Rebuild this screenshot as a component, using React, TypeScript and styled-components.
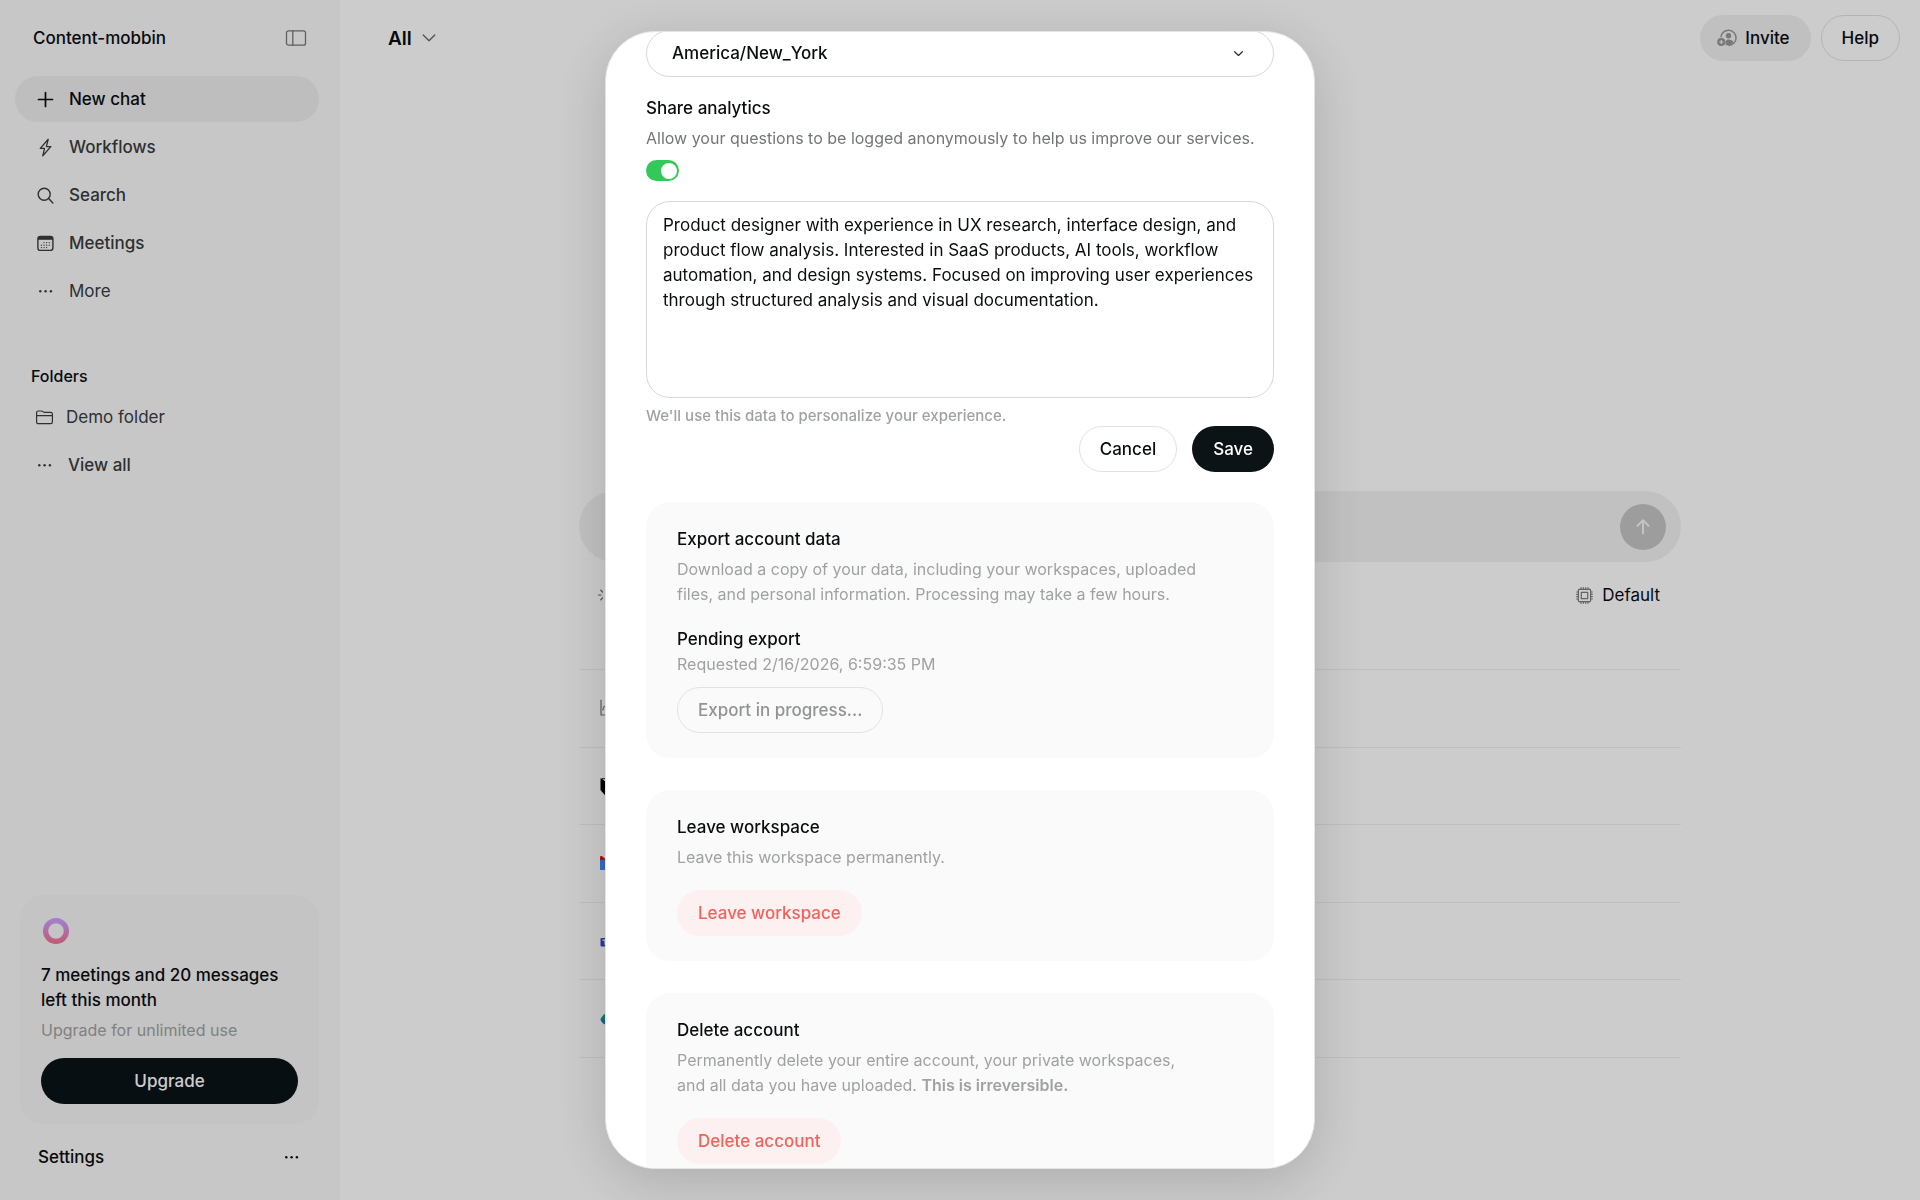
import React, { useState } from "react";
import styled, { createGlobalStyle, css } from "styled-components";

const color = {
  ink: "#0a0d0f",
  body: "#3a3d3f",
  muted: "#a0a2a2",
  soft: "#747676",
  line: "#e2e2e2",
  solid: "#0b1317",
  danger: "#f1635a",
};

const GlobalStyle = createGlobalStyle`
  *, *::before, *::after { box-sizing: border-box; }
  html, body, #root { height: 100%; }
  body {
    margin: 0;
    background: #ffffff;
    color: ${color.ink};
    font-family: Inter, "Liberation Sans", Arial, sans-serif;
    font-size: 17px;
    line-height: 25px;
    overflow: hidden;
  }
  button, select, textarea, input { font: inherit; color: inherit; }
  h1, h2, h3, p, ul { margin: 0; padding: 0; font-size: inherit; font-weight: inherit; }
  ul { list-style: none; }
`;

/* ---------- shell ---------- */

const Shell = styled.div`
  display: grid;
  grid-template-columns: 340px 1fr;
  min-height: 100%;
`;

const Sidebar = styled.aside`
  display: flex;
  flex-direction: column;
  padding: 15px 21px 20px 15px;
  background: #f9f9f9;
`;

const SidebarHead = styled.header`
  display: flex;
  align-items: center;
  justify-content: space-between;
  height: 46px;
  margin-bottom: 15px;
  padding: 0 12px 0 18px;
  font-weight: 500;
`;

const IconButton = styled.button`
  display: flex;
  padding: 0;
  border: 0;
  background: none;
  color: ${(p) => p.color || color.body};
  cursor: pointer;
`;

const Nav = styled.nav`
  display: flex;
  flex-direction: column;
  gap: 2px;
`;

const NavLink = styled.a<{ $active?: boolean; $light?: boolean }>`
  display: flex;
  align-items: center;
  gap: 14px;
  height: 46px;
  padding: 0 21px;
  border-radius: 23px;
  background: ${(p) => (p.$active ? "#eeeeee" : "transparent")};
  color: ${(p) => (p.$active ? color.ink : color.body)};
  font-weight: ${(p) => (p.$light ? 400 : 500)};
  text-decoration: none;
`;

const FoldersTitle = styled.h2`
  margin: 50px 0 5px 16px;
  font-size: 16px;
  font-weight: 500;
`;

const FolderNav = styled(Nav)`
  a {
    padding-left: 20px;
  }
`;

const FolderLink = styled(NavLink)`
  gap: 12px;
`;

const UpgradeCard = styled.section`
  display: flex;
  flex-direction: column;
  margin: auto 0 10px 5px;
  padding: 20px 21px;
  border-radius: 24px;
  background: #f5f5f5;
`;

const UpgradeText = styled.p`
  margin: 18px 0 5px;
  font-weight: 500;
`;

const UpgradeNote = styled.p`
  margin-bottom: 15px;
  color: ${color.muted};
  font-size: 16px;
`;

const SettingsRow = styled.div`
  display: flex;
  align-items: center;
  justify-content: space-between;
  height: 46px;
  padding: 0 18px 0 23px;
  font-weight: 500;
`;

const PlainLink = styled.a`
  color: inherit;
  text-decoration: none;
`;

/* ---------- buttons ---------- */

type Tone = "solid" | "outline" | "soft" | "danger";

const tones = {
  solid: css`
    background: ${color.solid};
    color: #ffffff;
  `,
  outline: css`
    border-color: ${color.line};
    background: transparent;
  `,
  soft: css`
    padding-left: 16px;
    background: #f1f1f1;
  `,
  danger: css`
    background: #fcf0f0;
    color: ${color.danger};
  `,
};

const Button = styled.button<{ $tone: Tone }>`
  display: inline-flex;
  align-items: center;
  justify-content: center;
  gap: 8px;
  height: 46px;
  padding: 0 20px;
  border: 1px solid transparent;
  border-radius: 23px;
  font-weight: 500;
  white-space: nowrap;
  cursor: pointer;
  ${(p) => tones[p.$tone]}
  &:disabled {
    color: #929494;
    cursor: default;
  }
`;

/* ---------- main ---------- */

const Main = styled.main`
  display: flex;
  flex-direction: column;
  align-items: center;
  padding: 15px 20px;
`;

const TopBar = styled.header`
  display: flex;
  align-items: center;
  justify-content: space-between;
  align-self: stretch;
  padding-left: 28px;
`;

const ScopeButton = styled.button`
  display: flex;
  align-items: center;
  gap: 10px;
  padding: 0;
  border: 0;
  background: none;
  font-size: 19px;
  font-weight: 600;
  cursor: pointer;
`;

const TopActions = styled.div`
  display: flex;
  gap: 10px;
`;

const Workspace = styled.div`
  width: 100%;
  max-width: 1102px;
  margin-top: 430px;
`;

const Composer = styled.div`
  display: flex;
  align-items: center;
  justify-content: flex-end;
  height: 71px;
  padding: 0 15px;
  border-radius: 36px;
  background: #f2f2f2;
`;

const SendButton = styled.button`
  display: flex;
  align-items: center;
  justify-content: center;
  width: 46px;
  height: 46px;
  padding: 0;
  border: 0;
  border-radius: 50%;
  background: #c5c5c5;
  color: #f4f4f4;
`;

const ComposerMeta = styled.div`
  display: flex;
  align-items: center;
  justify-content: space-between;
  height: 66px;
  padding: 0 21px 0 18px;
`;

const ModelButton = styled(IconButton)`
  align-items: center;
  gap: 9px;
  color: ${color.ink};
`;

const SourceList = styled.ul`
  display: grid;
  grid-template-rows: repeat(5, 1fr);
  height: 389px;
  margin-top: 41px;
  border-top: 1px solid #f0f0f0;
`;

const SourceRow = styled.li`
  display: flex;
  align-items: center;
  padding: 0 21px;
  border-bottom: 1px solid #f0f0f0;
`;

/* ---------- dialog ---------- */

const Overlay = styled.div`
  position: fixed;
  inset: 0;
  display: flex;
  justify-content: center;
  padding: 31px 20px;
  background: rgba(0, 0, 0, 0.2);
`;

const Dialog = styled.div`
  width: 100%;
  max-width: 710px;
  border: 1px solid #e4e4e4;
  border-radius: 50px;
  background: #ffffff;
  box-shadow: 0 12px 56px rgba(0, 0, 0, 0.16);
  overflow: hidden;
`;

const DialogBody = styled.div`
  display: flex;
  flex-direction: column;
  margin-top: -2px;
  padding: 0 40px 40px;
`;

const SelectWrap = styled.div`
  position: relative;
  margin-bottom: 19px;
  svg {
    position: absolute;
    top: 18px;
    right: 30px;
    pointer-events: none;
  }
`;

const Select = styled.select`
  appearance: none;
  width: 100%;
  height: 47px;
  padding: 0 25px;
  border: 1px solid #d8d8d8;
  border-radius: 24px;
  background: #ffffff;
  font-weight: 500;
`;

const FieldLabel = styled.label`
  font-weight: 500;
`;

const FieldNote = styled.p`
  margin: 5px 0 9px;
  color: ${color.soft};
  font-size: 16px;
`;

const Switch = styled.input`
  appearance: none;
  display: flex;
  align-items: center;
  width: 33px;
  height: 21px;
  margin: 0 0 20px;
  padding: 0 2px;
  border-radius: 11px;
  background: #d4d4d4;
  cursor: pointer;
  &::before {
    content: "";
    width: 16px;
    height: 16px;
    border-radius: 50%;
    background: #ffffff;
  }
  &:checked {
    justify-content: flex-end;
    background: #34c759;
  }
`;

const Bio = styled.textarea`
  display: block;
  width: 100%;
  height: 197px;
  padding: 11px 16px;
  border: 1px solid #d8d8d8;
  border-radius: 24px;
  background: #ffffff;
  resize: none;
  outline: none;
`;

const BioNote = styled.label`
  margin-top: 7px;
  color: ${color.muted};
  font-size: 15px;
  font-weight: 500;
  line-height: 21px;
`;

const FormActions = styled.div`
  display: flex;
  justify-content: flex-end;
  gap: 15px;
`;

const Card = styled.section<{ $first?: boolean }>`
  display: flex;
  flex-direction: column;
  align-items: flex-start;
  margin-top: ${(p) => (p.$first ? 30 : 32)}px;
  padding: 25px 31px;
  border-radius: 24px;
  background: #fafafa;
`;

const CardTitle = styled.h3`
  font-weight: 500;
`;

const CardText = styled.p<{ $tight?: boolean }>`
  max-width: 525px;
  margin: ${(p) => (p.$tight ? "0 0 10px" : "5px 0 20px")};
  color: ${color.muted};
  font-size: 16px;
  strong {
    font-weight: 600;
  }
`;

/* ---------- icons ---------- */

const line = {
  fill: "none",
  stroke: "currentColor",
  strokeLinecap: "round" as const,
  strokeLinejoin: "round" as const,
};

const PanelIcon = () => (
  <svg width="22" height="18" viewBox="0 0 22 18" {...line} strokeWidth="1.3">
    <rect x="1.5" y="1.8" width="19" height="14.4" rx="2" />
    <path d="M7.8 1.8v14.4" />
  </svg>
);

const PlusIcon = () => (
  <svg width="19" height="19" viewBox="0 0 19 19" {...line} strokeWidth="1.7">
    <path d="M9.5 2.5v14M2.5 9.5h14" />
  </svg>
);

const BoltIcon = () => (
  <svg width="19" height="19" viewBox="0 0 19 19" {...line} strokeWidth="1.3">
    <path d="M12.2 1.3L4.3 10.4h4.2l-1.7 7.4 8-9.2h-4.4z" />
  </svg>
);

const SearchIcon = () => (
  <svg width="19" height="19" viewBox="0 0 19 19" {...line} strokeWidth="1.4">
    <circle cx="8.2" cy="8.2" r="6" />
    <path d="M12.6 12.6l4.3 4.3" />
  </svg>
);

const CalendarIcon = () => (
  <svg width="19" height="19" viewBox="0 0 19 19" {...line} strokeWidth="1.4">
    <rect x="1.9" y="2.4" width="15" height="14" rx="2.4" />
    <path d="M2 4.4h15" strokeWidth="2.8" strokeLinecap="butt" />
    <path
      d="M8 8.6h.1M10.6 8.6h.1M13.2 8.6h.1M5.4 11.2h.1M8 11.2h.1M10.6 11.2h.1M13.2 11.2h.1M5.4 13.6h.1M8 13.6h.1M10.6 13.6h.1"
      strokeWidth="1.2"
    />
  </svg>
);

const DotsIcon = () => (
  <svg width="19" height="19" viewBox="0 0 19 19" fill="currentColor">
    <circle cx="4.3" cy="9.3" r="1.2" />
    <circle cx="9.6" cy="9.3" r="1.2" />
    <circle cx="14.9" cy="9.3" r="1.2" />
  </svg>
);

const FolderIcon = () => (
  <svg width="19" height="19" viewBox="0 0 19 19" {...line} strokeWidth="1.2">
    <path d="M1.6 14V4.6c0-1 .7-1.6 1.6-1.6h3c.9 0 1.2.2 1.7.7.4.4.8.6 1.5.6h6.3c1 0 1.7.7 1.7 1.7v8c0 1-.7 1.7-1.7 1.7H3.3c-1 0-1.7-.7-1.7-1.7z" />
    <path d="M1.6 7.6h15.8" />
  </svg>
);

const ScopeChevron = () => (
  <svg width="14" height="10" viewBox="0 0 14 10" {...line} strokeWidth="1.3" color="#666">
    <path d="M1.2 2L7 7.8 12.8 2" />
  </svg>
);

const SelectChevron = () => (
  <svg width="11" height="11" viewBox="0 0 11 11" {...line} strokeWidth="1.3" color="#333">
    <path d="M1.6 3.800l3.900 3.600 3.900-3.600" />
  </svg>
);

const InviteIcon = () => (
  <svg width="20" height="18" viewBox="0 0 20 18" color="#969696">
    <path
      d="M3.9 8.3A7.6 7.6 0 1 1 11.4 16.4"
      fill="none"
      stroke="currentColor"
      strokeWidth="1.5"
    />
    <circle cx="11.5" cy="6.7" r="2.7" fill="currentColor" />
    <path
      d="M8.6 12.4c.6-1.3 1.7-1.9 3.2-1.9 2 0 3.9 1 4.6 2.6-1.2 1.9-3.1 3.1-5.6 3.2H8.8z"
      fill="currentColor"
    />
    <circle cx="4.3" cy="13" r="4.1" fill="currentColor" />
    <path d="M4.3 10.900v4.200M2.200 13h4.200" stroke="#f1f1f1" strokeWidth="1.2" />
  </svg>
);

const ArrowUpIcon = () => (
  <svg width="18" height="18" viewBox="0 0 18 18" {...line} strokeWidth="2">
    <path d="M9 15.5V2.5M3.5 7.7L9 2.200l5.500 5.500" />
  </svg>
);

const ChipIcon = () => (
  <svg width="17" height="17" viewBox="0 0 17 17" {...line} strokeWidth="1.2" color="#7d7d7d">
    <rect x="2.400" y="2.400" width="12.200" height="12.200" rx="0.800" />
    <rect x="5.300" y="5.300" width="6.400" height="6.400" />
    <path d="M5 .7v1.5M7.3 .7v1.5M9.7 .7v1.5M12 .7v1.5M5 14.8v1.5M7.3 14.8v1.5M9.7 14.8v1.5M12 14.8v1.5M.7 5h1.5M.7 7.3h1.5M.7 9.7h1.5M.7 12h1.5M14.8 5h1.5M14.8 7.3h1.5M14.8 9.7h1.5M14.8 12h1.5" />
  </svg>
);

const RaysIcon = () => (
  <svg width="18" height="18" viewBox="0 0 18 18" {...line} strokeWidth="1.200" color="#666">
    <path d="M1.500 9h2.500M14 9h2.500M9 1.500V4M9 14v2.500M3.700 4.200l1.800 1.800M12.500 12l1.800 1.800M3.700 13.800L5.500 12M12.500 6l1.800-1.800" />
  </svg>
);

const Ring = () => (
  <svg width="30" height="30" viewBox="0 0 30 30">
    <defs>
      <linearGradient id="ring" x1="0" y1="0" x2="0" y2="1">
        <stop offset="0" stopColor="#cd9dff" />
        <stop offset="1" stopColor="#ee7499" />
      </linearGradient>
    </defs>
    <circle cx="15" cy="16" r="10.4" fill="none" stroke="url(#ring)" strokeWidth="5.2" />
  </svg>
);

const StemIcon = () => (
  <svg width="18" height="18" viewBox="0 0 18 18" {...line} strokeWidth="1.2" color="#777">
    <path d="M1 1v15h8a5 5 0 0 0 0-9H6Q3 7 3 11" />
  </svg>
);

const BlockIcon = () => (
  <svg width="18" height="18" viewBox="0 0 18 18">
    <path d="M.5 1.5L12 .7l5.500 3.500V17l-13 .8L.5 13z" fill="#000" />
    <path d="M2.5 2.3l8.500-.5 3 1.700-9.500.5z" fill="#fff" />
  </svg>
);

const MailIcon = () => (
  <svg width="18" height="14" viewBox="0 0 18 14">
    <path d="M0 3h5v11H0z" fill="#4285f4" />
    <path d="M13 3h5v11h-5z" fill="#34a853" />
    <path d="M5 2l4 3.300L13 2v5l-4 3.500L5 7z" fill="#ea4335" />
    <path d="M0 4V1.500C0 .2 1.500-.3 2.500.5L5 2.500V4z" fill="#c5221f" />
    <path d="M13 2.500l2.500-2c1-.8 2.500-.3 2.500 1V4h-5z" fill="#fbbc04" />
  </svg>
);

const TeamIcon = () => (
  <svg width="18" height="18" viewBox="0 0 18 18">
    <circle cx="10" cy="4" r="3" fill="#7b83eb" />
    <path d="M7 6h10v6a5 5 0 0 1-10 1z" fill="#5059c9" />
    <rect x=".5" y="6" width="9" height="8.5" rx="1" fill="#3b46c4" />
    <path d="M2.500 8.200h5M5 8.200v4.500" stroke="#fff" strokeWidth="1.200" />
  </svg>
);

const LeafIcon = () => (
  <svg width="18" height="18" viewBox="0 0 18 18">
    <path d="M.5 10Q1 6 6 3h6q5 3 5.500 7z" fill="#14a06a" />
    <path d="M.5 9.500Q1.500 13 6 15h6q5-2 5.500-5.500z" fill="#1878c8" />
  </svg>
);

/* ---------- page ---------- */

const bioText =
  "Product designer with experience in UX research, interface design, and product flow analysis. Interested in SaaS products, AI tools, workflow automation, and design systems. Focused on improving user experiences through structured analysis and visual documentation.";

const sources = [StemIcon, BlockIcon, MailIcon, TeamIcon, LeafIcon];

function SettingsDialog() {
  const [share, setShare] = useState(true);
  const [bio, setBio] = useState(bioText);
  return (
    <Overlay>
      <Dialog role="dialog" aria-modal="true">
        <DialogBody>
          <SelectWrap>
            <Select aria-label="Timezone" defaultValue="America/New_York">
              <option>America/New_York</option>
            </Select>
            <SelectChevron />
          </SelectWrap>

          <FieldLabel htmlFor="share">Share analytics</FieldLabel>
          <FieldNote>
            Allow your questions to be logged anonymously to help us improve our services.
          </FieldNote>
          <Switch
            id="share"
            type="checkbox"
            checked={share}
            onChange={(e) => setShare(e.target.checked)}
          />

          <Bio id="bio" spellCheck={false} value={bio} onChange={(e) => setBio(e.target.value)} />
          <BioNote htmlFor="bio">We'll use this data to personalize your experience.</BioNote>
          <FormActions>
            <Button $tone="outline">Cancel</Button>
            <Button $tone="solid">Save</Button>
          </FormActions>

          <Card $first>
            <CardTitle>Export account data</CardTitle>
            <CardText>
              Download a copy of your data, including your workspaces, uploaded files, and personal
              information. Processing may take a few hours.
            </CardText>
            <CardTitle>Pending export</CardTitle>
            <CardText $tight>Requested 2/16/2026, 6:59:35 PM</CardText>
            <Button $tone="outline" disabled>
              Export in progress...
            </Button>
          </Card>

          <Card>
            <CardTitle>Leave workspace</CardTitle>
            <CardText>Leave this workspace permanently.</CardText>
            <Button $tone="danger">Leave workspace</Button>
          </Card>

          <Card>
            <CardTitle>Delete account</CardTitle>
            <CardText>
              Permanently delete your entire account, your private workspaces, and all data you have
              uploaded. <strong>This is irreversible.</strong>
            </CardText>
            <Button $tone="danger">Delete account</Button>
          </Card>
        </DialogBody>
      </Dialog>
    </Overlay>
  );
}

export default function App() {
  return (
    <>
      <GlobalStyle />
      <Shell>
        <Sidebar>
          <SidebarHead>
            Content-mobbin
            <IconButton aria-label="Toggle sidebar" color="#777">
              <PanelIcon />
            </IconButton>
          </SidebarHead>
          <Nav>
            <NavLink href="#" $active>
              <PlusIcon />
              New chat
            </NavLink>
            <NavLink href="#">
              <BoltIcon />
              Workflows
            </NavLink>
            <NavLink href="#">
              <SearchIcon />
              Search
            </NavLink>
            <NavLink href="#">
              <CalendarIcon />
              Meetings
            </NavLink>
            <NavLink href="#" $light>
              <DotsIcon />
              More
            </NavLink>
          </Nav>
          <FoldersTitle>Folders</FoldersTitle>
          <FolderNav>
            <FolderLink href="#" $light>
              <FolderIcon />
              Demo folder
            </FolderLink>
            <NavLink href="#">
              <DotsIcon />
              View all
            </NavLink>
          </FolderNav>

          <UpgradeCard>
            <Ring />
            <UpgradeText>7 meetings and 20 messages left this month</UpgradeText>
            <UpgradeNote>Upgrade for unlimited use</UpgradeNote>
            <Button $tone="solid">Upgrade</Button>
          </UpgradeCard>
          <SettingsRow>
            <PlainLink href="#">Settings</PlainLink>
            <IconButton aria-label="More settings" color={color.ink}>
              <DotsIcon />
            </IconButton>
          </SettingsRow>
        </Sidebar>

        <Main>
          <TopBar>
            <ScopeButton>
              All
              <ScopeChevron />
            </ScopeButton>
            <TopActions>
              <Button $tone="soft">
                <InviteIcon />
                Invite
              </Button>
              <Button $tone="outline">Help</Button>
            </TopActions>
          </TopBar>
          <Workspace>
            <Composer>
              <SendButton aria-label="Send">
                <ArrowUpIcon />
              </SendButton>
            </Composer>
            <ComposerMeta>
              <RaysIcon />
              <ModelButton>
                <ChipIcon />
                Default
              </ModelButton>
            </ComposerMeta>
            <SourceList>
              {sources.map((Icon, i) => (
                <SourceRow key={i}>
                  <Icon />
                </SourceRow>
              ))}
            </SourceList>
          </Workspace>
        </Main>
      </Shell>
      <SettingsDialog />
    </>
  );
}
